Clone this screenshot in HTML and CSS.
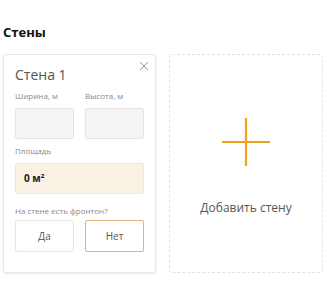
FILE: index.html
```html
<html>
	<head>
		<title> Стены </title>
		<link rel="stylesheet" href="styles.css">
	</head>
	<body>
		<h2 class="section-title">Стены</h2>

		<div class="walls">
			<div class="wall-card">
				<div class="close-button">
					<svg width="10" height="10" viewBox="0 0 10 10">
						<path d="M1 1 L9 9 M9 1 L1 9" stroke="#9a9a9a" stroke-width="1" fill="none"/>
					</svg>
				</div>
				<div class="wall-name">Стена 1</div>

				<div class="size-row">
					<div class="field">
						<div class="field-label">Ширина, м</div>
						<div class="field-input"></div>
					</div>
					<div class="field">
						<div class="field-label">Высота, м</div>
						<div class="field-input"></div>
					</div>
				</div>

				<div class="field-label">Площадь</div>
				<div class="area-box">0 м²</div>

				<div class="field-label choice-label">На стене есть фронтон?</div>
				<div class="choice-row">
					<div class="choice">Да</div>
					<div class="choice choice-active">Нет</div>
				</div>
			</div>

			<div class="add-card">
				<svg class="add-icon" width="48" height="48" viewBox="0 0 48 48">
					<path d="M24 0 V48 M0 24 H48" stroke="#f0a01e" stroke-width="2.2" fill="none"/>
				</svg>
				<div class="add-text">Добавить стену</div>
			</div>
		</div>
	</body>
</html>
```

FILE: styles.css
```css
* {
	font-family: "Open Sans", sans-serif;
	margin: 0;
	padding: 0;
	box-sizing: border-box;
}

body {
	padding: 22px 3px 0 3px;
	background: #fff;
}

.section-title {
	font-size: 13px;
	font-weight: bold;
	color: #111;
	line-height: 20px;
	margin-bottom: 12px;
}

.walls {
	display: flex;
	gap: 13px;
}

.wall-card {
	position: relative;
	width: 153px;
	height: 219px;
	border: 1px solid #e6e6e6;
	border-radius: 3px;
	box-shadow: 0 1px 3px rgba(0, 0, 0, 0.08);
	padding: 10px 11px 0 11px;
}

.close-button {
	position: absolute;
	top: 6px;
	right: 6px;
	line-height: 0;
}

.wall-name {
	font-size: 14px;
	color: #555;
	line-height: 20px;
	margin-bottom: 5px;
}

.size-row {
	display: flex;
	gap: 11px;
	margin-bottom: 6px;
}

.field {
	width: 59px;
}

.field-label {
	font-size: 8px;
	color: #888;
	line-height: 12px;
	margin-bottom: 6px;
}

.choice-label {
	margin-bottom: 3px;
}

.field-input {
	height: 31px;
	background: #f5f5f5;
	border: 1px solid #e4e4e4;
	border-radius: 2px;
}

.area-box {
	height: 31px;
	background: #fbf2e6;
	border: 1px solid #f0e6d8;
	border-radius: 2px;
	font-size: 10px;
	font-weight: bold;
	color: #222;
	line-height: 29px;
	padding-left: 8px;
	margin-bottom: 11px;
}

.choice-row {
	display: flex;
	gap: 11px;
}

.choice {
	width: 59px;
	height: 32px;
	border: 1px solid #e4e4e4;
	border-radius: 2px;
	font-size: 10px;
	color: #555;
	text-align: center;
	line-height: 30px;
}

.choice-active {
	border: 1.5px solid #e8b277;
}

.add-card {
	width: 154px;
	height: 219px;
	border: 1px dashed #e2e2e2;
	border-radius: 3px;
	display: flex;
	flex-direction: column;
	align-items: center;
	padding-top: 63px;
}

.add-icon {
	margin-bottom: 34px;
}

.add-text {
	font-size: 12px;
	color: #555;
	line-height: 16px;
}
```
